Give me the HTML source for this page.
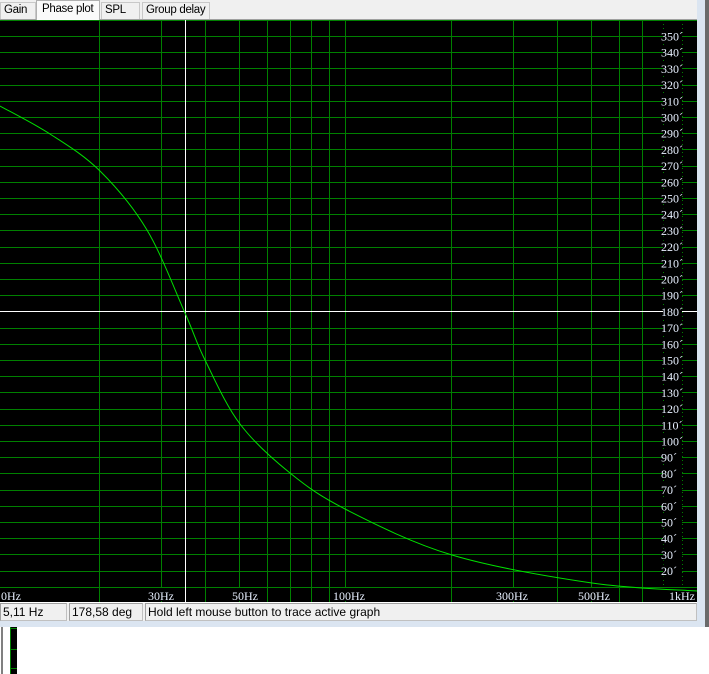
<!DOCTYPE html>
<html><head><meta charset="utf-8"><style>
*{margin:0;padding:0;box-sizing:border-box}
body{width:709px;height:674px;background:#fff;position:relative;overflow:hidden;font-family:"Liberation Sans",sans-serif}
.tabbar{position:absolute;left:0;top:0;width:697px;height:20px;background:#f0f0f0;border-bottom:1px solid #a0a0a0}
.tab{position:absolute;top:2px;height:17px;background:#f0f0f0;border:1px solid #c8c8c8;border-bottom:none;font-size:11.5px;letter-spacing:-0.3px;line-height:15px;padding-left:3px;color:#000;white-space:nowrap;overflow:hidden}
.sel{top:0;height:20px;background:#fafafa;border-color:#b0b0b0}
.status{position:absolute;top:602px;height:19px;background:#f0f0f0;border-top:1px solid #fff}
.fld{position:absolute;top:603px;height:18px;border:1px solid #c0c0c0;border-top-color:#a0a0a0;border-left-color:#a0a0a0;font-size:12px;line-height:16px;padding-left:2px;background:#f0f0f0;white-space:nowrap;overflow:hidden}
</style></head><body>
<div class="tabbar"></div>
<div class="tab" style="left:0;width:36px">Gain</div>
<div class="tab sel" style="left:36px;width:64px;padding-left:5px;line-height:17px">Phase plot</div>
<div class="tab" style="left:101px;width:39px">SPL</div>
<div class="tab" style="left:142px;width:68px">Group delay</div>
<svg id="g" width="697" height="582" style="position:absolute;left:0;top:20px" xmlns="http://www.w3.org/2000/svg">
<rect width="697" height="582" fill="#000"/>
<g id="grid" fill="#008000"></g>
<g id="over"></g>
<g id="lab" font-family="Liberation Serif,serif" font-size="12" fill="#e8f0ff"></g>
<path id="curve" fill="none" stroke="#00e000" stroke-width="1"/>
</svg>
<div class="status" style="left:0;width:697px"></div>
<div class="fld" style="left:0;width:67px">5,11 Hz</div>
<div class="fld" style="left:69px;width:74px">178,58 deg</div>
<div class="fld" style="left:145px;width:552px">Hold left mouse button to trace active graph</div>
<div style="position:absolute;left:0;top:621px;width:697px;height:6px;background:#dbe5f1"></div>
<div style="position:absolute;left:697px;top:0;width:8px;height:627px;background:#dbe5f1"></div>
<div style="position:absolute;left:705px;top:0;width:4px;height:627px;background:#6a6a6a"></div>
<div style="position:absolute;left:1px;top:627px;width:2px;height:47px;background:#808080"></div>
<div style="position:absolute;left:10px;top:627px;width:7px;height:47px;background:#000;border-left:1px solid #008000"></div>
<div style="position:absolute;left:11px;top:628px;width:6px;height:1px;background:#008000"></div>
<div style="position:absolute;left:11px;top:649px;width:6px;height:1px;background:#008000"></div>
<div style="position:absolute;left:11px;top:668px;width:6px;height:1px;background:#008000"></div>
<script>
var NS="http://www.w3.org/2000/svg",g=document.getElementById("grid"),lab=document.getElementById("lab"),ov=document.getElementById("over");
function el(p,t,a){var e=document.createElementNS(NS,t);for(var k in a)e.setAttribute(k,a[k]);p.appendChild(e);return e}
function Y(d){return (36+(350-d)/10*16.2)-20}
[99,161,205,239,267,290,311,329,345,451,513,557,591,619,642].forEach(function(x){el(g,"rect",{x:x,y:0,width:1,height:582})});
el(g,"rect",{x:0,y:0,width:697,height:1});
for(var d=10;d<=350;d+=10){if(d==180)continue;el(g,"rect",{x:0,y:Math.round(Y(d)),width:697,height:1})}
for(var d=20;d<=350;d+=10){var y=Y(d);el(lab,"rect",{x:663,y:y-6,width:19,height:12,fill:"#000"});var t=el(lab,"text",{x:661,y:y+4.5});t.textContent=d+"\u00b4"}
[663.5,682.5].forEach(function(x){el(ov,"line",{x1:x,y1:0,x2:x,y2:565,stroke:"#008000","stroke-dasharray":"1,3"})});
el(ov,"rect",{x:185,y:0,width:1,height:582,fill:"#fff"});
el(ov,"rect",{x:0,y:Math.round(Y(180)),width:697,height:1,fill:"#fff"});
[[1,"0Hz"],[148,"30Hz"],[232,"50Hz"],[333,"100Hz"],[496,"300Hz"],[578,"500Hz"],[669,"1kHz"]].forEach(function(a){var w=a[1].length*7;el(lab,"rect",{x:a[0],y:568,width:w,height:13,fill:"#000"});var t=el(lab,"text",{x:a[0],y:580});t.textContent=a[1]});
var P=[[0,106],[50,134],[100,171],[147,230],[185,313],[205,360],[240,424],[290,473],[347,510],[452,555],[592,583],[697,591]];
var s="M"+P[0][0]+","+(P[0][1]-20);
for(var i=0;i<P.length-1;i++){var p0=P[Math.max(0,i-1)],p1=P[i],p2=P[i+1],p3=P[Math.min(P.length-1,i+2)];
var c1x=p1[0]+(p2[0]-p0[0])/6,c1y=p1[1]+(p2[1]-p0[1])/6,c2x=p2[0]-(p3[0]-p1[0])/6,c2y=p2[1]-(p3[1]-p1[1])/6;
s+="C"+c1x.toFixed(1)+","+(c1y-20).toFixed(1)+" "+c2x.toFixed(1)+","+(c2y-20).toFixed(1)+" "+p2[0]+","+(p2[1]-20)}
document.getElementById("curve").setAttribute("d",s);
</script>
</body></html>
